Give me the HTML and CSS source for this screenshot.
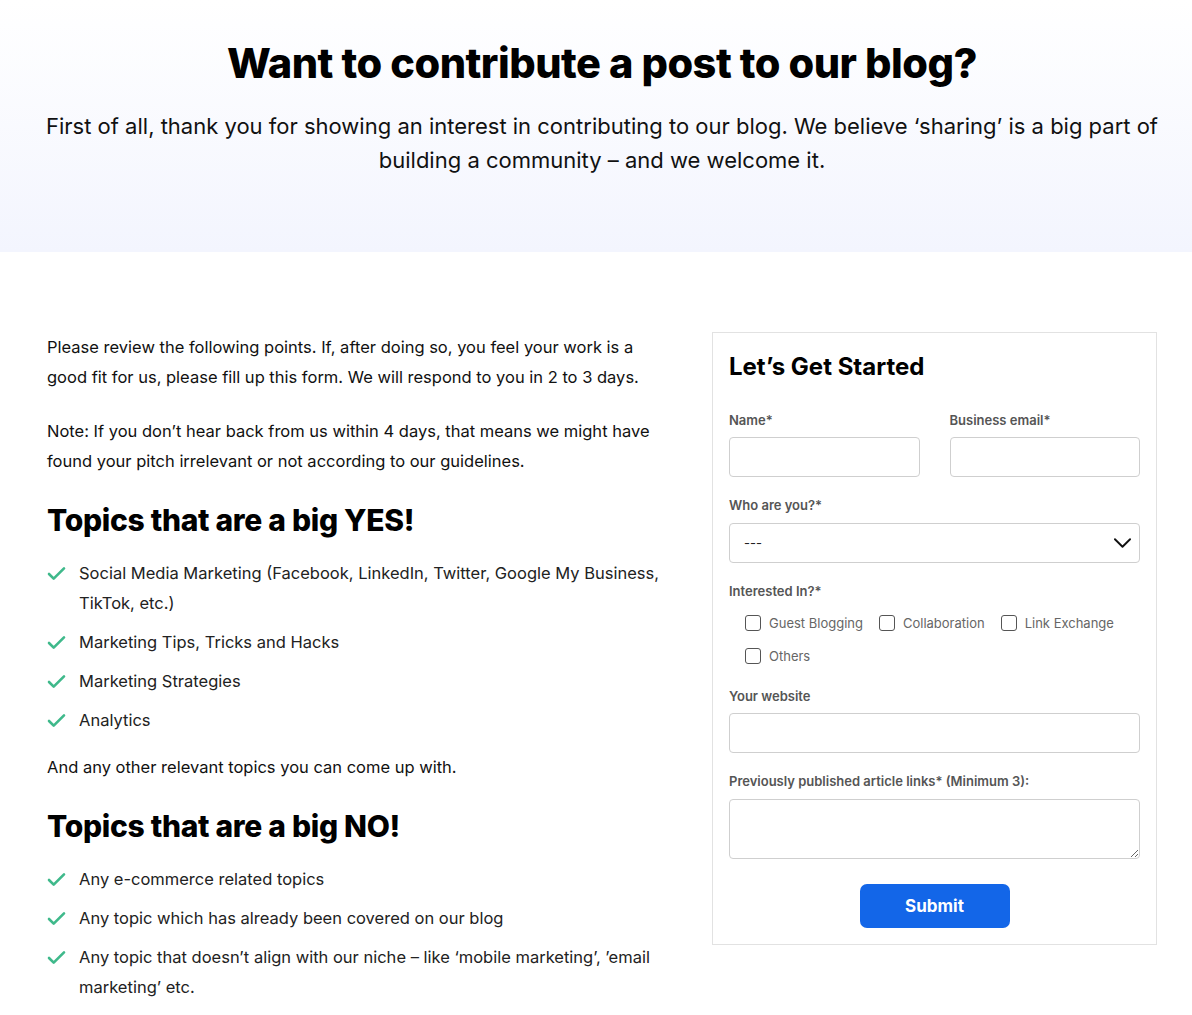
FILE: index.html
```html
<!DOCTYPE html>
<html lang="en">
<head>
<meta charset="utf-8">
<title>Contribute a post</title>
<link rel="stylesheet" href="styles.css">
</head>
<body>
<header class="hero">
  <h1 class="hero-title">Want to contribute a post to our blog?</h1>
  <p class="hero-sub">First of all, thank you for showing an interest in contributing to our blog. We believe ‘sharing’ is a big part of building a community – and we welcome it.</p>
</header>
<main class="main">
  <section class="info">
    <p class="para">Please review the following points. If, after doing so, you feel your work is a good fit for us, please fill up this form. We will respond to you in 2 to 3 days.</p>
    <p class="para">Note: If you don’t hear back from us within 4 days, that means we might have found your pitch irrelevant or not according to our guidelines.</p>
    <h2 class="topic-title">Topics that are a big YES!</h2>
    <ul class="checklist">
      <li class="check-item"><svg class="check" viewBox="0 0 20 16"><path d="M2 8.5l5 5L18 2.5" fill="none" stroke="#3fb98b" stroke-width="2.8" stroke-linecap="round" stroke-linejoin="round"/></svg><span>Social Media Marketing (Facebook, LinkedIn, Twitter, Google My Business, TikTok, etc.)</span></li>
      <li class="check-item"><svg class="check" viewBox="0 0 20 16"><path d="M2 8.5l5 5L18 2.5" fill="none" stroke="#3fb98b" stroke-width="2.8" stroke-linecap="round" stroke-linejoin="round"/></svg><span>Marketing Tips, Tricks and Hacks</span></li>
      <li class="check-item"><svg class="check" viewBox="0 0 20 16"><path d="M2 8.5l5 5L18 2.5" fill="none" stroke="#3fb98b" stroke-width="2.8" stroke-linecap="round" stroke-linejoin="round"/></svg><span>Marketing Strategies</span></li>
      <li class="check-item"><svg class="check" viewBox="0 0 20 16"><path d="M2 8.5l5 5L18 2.5" fill="none" stroke="#3fb98b" stroke-width="2.8" stroke-linecap="round" stroke-linejoin="round"/></svg><span>Analytics</span></li>
    </ul>
    <p class="para para-after">And any other relevant topics you can come up with.</p>
    <h2 class="topic-title">Topics that are a big NO!</h2>
    <ul class="checklist">
      <li class="check-item"><svg class="check" viewBox="0 0 20 16"><path d="M2 8.5l5 5L18 2.5" fill="none" stroke="#3fb98b" stroke-width="2.8" stroke-linecap="round" stroke-linejoin="round"/></svg><span>Any e-commerce related topics</span></li>
      <li class="check-item"><svg class="check" viewBox="0 0 20 16"><path d="M2 8.5l5 5L18 2.5" fill="none" stroke="#3fb98b" stroke-width="2.8" stroke-linecap="round" stroke-linejoin="round"/></svg><span>Any topic which has already been covered on our blog</span></li>
      <li class="check-item"><svg class="check" viewBox="0 0 20 16"><path d="M2 8.5l5 5L18 2.5" fill="none" stroke="#3fb98b" stroke-width="2.8" stroke-linecap="round" stroke-linejoin="round"/></svg><span>Any topic that doesn’t align with our niche – like ‘mobile marketing’, ’email marketing’ etc.</span></li>
    </ul>
  </section>
  <aside class="card">
    <h3 class="card-title">Let’s Get Started</h3>
    <form class="form">
      <div class="row-2">
        <div class="field">
          <label class="label">Name*</label>
          <input class="input" type="text">
        </div>
        <div class="field">
          <label class="label">Business email*</label>
          <input class="input" type="email">
        </div>
      </div>
      <div class="field">
        <label class="label label-select">Who are you?*</label>
        <div class="select">
          <span class="select-value">---</span>
          <svg class="chevron" viewBox="0 0 18 10"><path d="M1 1l8 8 8-8" fill="none" stroke="#111" stroke-width="2" stroke-linecap="round" stroke-linejoin="round"/></svg>
        </div>
      </div>
      <div class="field">
        <label class="label">Interested In?*</label>
        <div class="checks">
          <label class="cb"><span class="box"></span>Guest Blogging</label>
          <label class="cb"><span class="box"></span>Collaboration</label>
          <label class="cb"><span class="box"></span>Link Exchange</label>
          <label class="cb"><span class="box"></span>Others</label>
        </div>
      </div>
      <div class="field">
        <label class="label">Your website</label>
        <input class="input" type="text">
      </div>
      <div class="field">
        <label class="label label-area">Previously published article links* (Minimum 3):</label>
        <textarea class="input textarea"></textarea>
      </div>
      <div class="submit-row">
        <button class="submit" type="button">Submit</button>
      </div>
    </form>
  </aside>
</main>
</body>
</html>
```

FILE: styles.css
```css
* { box-sizing: border-box; }
body {
  margin: 0;
  font-family: "Inter", "Liberation Sans", sans-serif;
  color: #111;
  background: #fff;
}
.hero {
  height: 252px;
  padding: 38px 8px 0 20px;
  background: linear-gradient(180deg, #ffffff 0%, #f3f5fe 100%);
  text-align: center;
}
.hero-title {
  margin: 0;
  font-size: 41.5px;
  line-height: 50px;
  font-weight: 800;
  letter-spacing: -0.5px;
  color: #000;
}
.hero-sub {
  margin: 21px 0 0;
  font-size: 22px;
  line-height: 34px;
  color: #111;
}
.main {
  display: flex;
  align-items: flex-start;
  gap: 45px;
  padding: 80px 35px 40px 47px;
}
.info { flex: 0 0 620px; min-width: 0; }
.para {
  margin: 0 0 24px;
  font-size: 16.5px;
  line-height: 30px;
  color: #111;
}
.info > .para:nth-of-type(2) { margin-bottom: 0; }
.topic-title {
  margin: 25px 0 19px;
  font-size: 30px;
  line-height: 38px;
  font-weight: 800;
  letter-spacing: -0.3px;
  color: #000;
}
.checklist {
  list-style: none;
  margin: 0;
  padding: 0;
}
.check-item {
  display: flex;
  gap: 13px;
  margin-bottom: 9px;
  font-size: 16.5px;
  line-height: 30px;
  color: #222;
}
.check-item:last-child { margin-bottom: 0; }
.check {
  flex: 0 0 19px;
  width: 19px;
  height: 15px;
  margin-top: 8px;
}
.para-after { margin: 17px 0 0; }
.card {
  flex: 0 0 445px;
  width: 445px;
  min-width: 0;
  border: 1px solid #e2e2e2;
  padding: 16px 16px 16px;
  background: #fff;
}
.card-title {
  margin: 2px 0 29px;
  font-size: 24px;
  line-height: 32px;
  font-weight: 700;
  color: #000;
}
.form { display: flex; flex-direction: column; gap: 20px; }
.row-2 { display: grid; grid-template-columns: minmax(0, 1fr) minmax(0, 1fr); gap: 30px; }
.field { display: flex; flex-direction: column; min-width: 0; }
.label {
  font-size: 13px;
  line-height: 16px;
  font-weight: 600;
  color: #555;
  margin-bottom: 9px;
}
.label-select, .label-area { margin-bottom: 10px; }
.input {
  width: 100%;
  min-width: 0;
  height: 40px;
  border: 1px solid #cfcfcf;
  border-radius: 4px;
  font: inherit;
  background: #fff;
}
.textarea {
  height: 60px;
  resize: vertical;
  display: block;
}
.select {
  height: 40px;
  border: 1px solid #cfcfcf;
  border-radius: 4px;
  display: flex;
  align-items: center;
  justify-content: space-between;
  padding: 0 8px 0 14px;
}
.select-value { font-size: 13px; color: #222; }
.chevron { width: 17px; height: 10px; }
.checks {
  display: flex;
  flex-wrap: wrap;
  column-gap: 16px;
  row-gap: 13px;
  padding-left: 16px;
  margin: 5px 0 2px;
}
.cb {
  display: flex;
  align-items: center;
  gap: 8px;
  font-size: 13px;
  line-height: 20px;
  color: #666;
}
.box {
  width: 16px;
  height: 16px;
  border: 1px solid #555;
  border-radius: 3px;
}
.submit-row { display: flex; justify-content: center; margin-top: 5px; }
.submit {
  width: 150px;
  height: 44px;
  border: 0;
  border-radius: 7px;
  background: #1366e8;
  color: #fff;
  font: inherit;
  font-size: 17px;
  font-weight: 700;
}
```
